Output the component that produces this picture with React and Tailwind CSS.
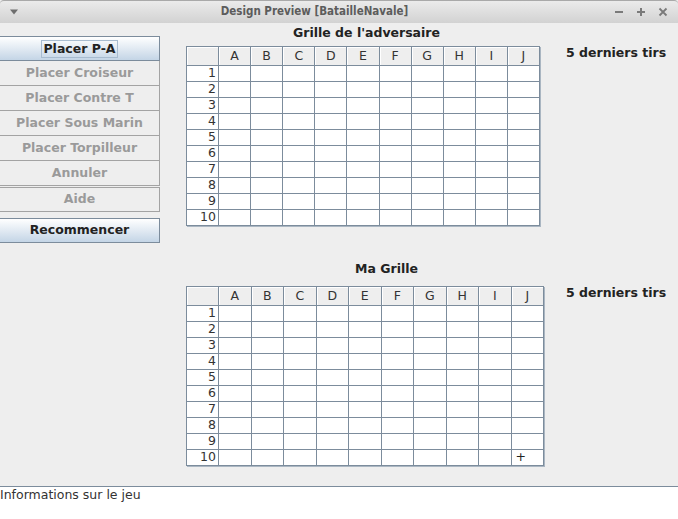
import React from 'react';

const letters = ['A', 'B', 'C', 'D', 'E', 'F', 'G', 'H', 'I', 'J'];
const rows = [1, 2, 3, 4, 5, 6, 7, 8, 9, 10];

const buttons = [
  { label: 'Placer Croiseur' },
  { label: 'Placer Contre T' },
  { label: 'Placer Sous Marin' },
  { label: 'Placer Torpilleur' },
  { label: 'Annuler' },
];

function Board({ wide, marks = {} }) {
  return (
    <div
      className={`grid ${wide ? 'w-[358px]' : 'w-[354px]'} grid-cols-[31px_repeat(10,1fr)] grid-rows-[18px_repeat(10,15px)] gap-px bg-[#7c8c9c] border border-[#7c8c9c] shadow-[1px_1px_0_#aab6c2]`}
    >
      <div className="bg-[#eeeeee] shadow-[inset_1px_1px_0_#ffffff]" />
      {letters.map((l) => (
        <div
          key={l}
          className="bg-[#eeeeee] shadow-[inset_1px_1px_0_#ffffff] flex items-center justify-center text-[12.5px] leading-none text-[#333]"
        >
          {l}
        </div>
      ))}
      {rows.map((r) => (
        <React.Fragment key={r}>
          <div className="bg-white flex items-center justify-end pr-[2px] text-[12.5px] leading-none text-[#333]">
            {r}
          </div>
          {letters.map((l) => (
            <div key={l} className="bg-white flex items-center pl-[4px] text-[12.5px] leading-none text-[#222]">
              {marks[`${l}${r}`] || ''}
            </div>
          ))}
        </React.Fragment>
      ))}
    </div>
  );
}

export default function App() {
  return (
    <div
      className="w-[678px] h-[519px] bg-[#eeeeee] flex flex-col overflow-hidden"
      style={{ fontFamily: '"DejaVu Sans", sans-serif' }}
    >
      {/* Title bar */}
      <div className="h-[23px] shrink-0 rounded-t-[4px] border-t border-[#a9a9a9] bg-gradient-to-b from-[#ebebeb] to-[#d2d2d2] flex items-center px-[8px]">
        <svg width="10" height="8" viewBox="0 0 10 8" className="ml-[1px]">
          <path d="M1 1.5 L9 1.5 L5 6.5 Z" fill="#6e6e6e" />
        </svg>
        <div
          className="flex-1 text-center text-[11.5px] font-bold text-[#5c5c5c] ml-[-4px]"
          style={{ fontFamily: '"Liberation Sans Narrow", "DejaVu Sans Condensed", "Liberation Sans", sans-serif' }}
        >
          Design Preview [BatailleNavale]
        </div>
        <div className="flex items-center gap-[12px] mr-[2px]">
          <svg width="10" height="10" viewBox="0 0 10 10">
            <rect x="1" y="4" width="8" height="2" fill="#7a7a7a" />
          </svg>
          <svg width="10" height="10" viewBox="0 0 10 10">
            <rect x="1" y="4" width="8" height="2" fill="#7a7a7a" />
            <rect x="4" y="1" width="2" height="8" fill="#7a7a7a" />
          </svg>
          <svg width="10" height="10" viewBox="0 0 10 10">
            <path d="M1.5 1.5 L8.5 8.5 M8.5 1.5 L1.5 8.5" stroke="#7a7a7a" strokeWidth="1.8" />
          </svg>
        </div>
      </div>

      {/* Main area */}
      <div className="flex-1 flex">
        {/* Buttons */}
        <div className="w-[160px] shrink-0 pt-[13px] flex flex-col text-[12.5px] font-bold">
          <div className="h-[25px] border border-l-0 border-[#7c8c9c] bg-gradient-to-b from-[#ffffff] to-[#c4d5e6] flex items-center justify-center">
            <span className="border border-[#a8bcd0] px-[1px] leading-[16px] text-[#222]">Placer P-A</span>
          </div>
          {buttons.map((b) => (
            <div
              key={b.label}
              className="h-[25px] border border-l-0 border-t-0 border-[#a3a3a3] flex items-center justify-center text-[#9a9a9a]"
            >
              {b.label}
            </div>
          ))}
          <div className="h-[25px] mt-[1px] border border-l-0 border-[#a3a3a3] flex items-center justify-center text-[#9a9a9a]">
            Aide
          </div>
          <div className="h-[25px] mt-[6px] border border-l-0 border-[#7c8c9c] bg-gradient-to-b from-[#ffffff] to-[#c4d5e6] flex items-center justify-center text-[#222]">
            Recommencer
          </div>
        </div>

        {/* Boards */}
        <div className="flex flex-col pl-[26px]">
          <div className="mt-[2px] h-[16px] leading-[16px] pl-[107px] text-[12.5px] font-bold text-[#222]">
            Grille de l'adversaire
          </div>
          <div className="mt-[5px] flex items-start">
            <Board />
            <div className="ml-[26px] mt-[-1px] leading-[16px] text-[12.5px] font-bold text-[#222]">5 derniers tirs</div>
          </div>

          <div className="mt-[35px] h-[16px] leading-[16px] pl-[169px] text-[12.5px] font-bold text-[#222]">
            Ma Grille
          </div>
          <div className="mt-[9px] flex items-start">
            <Board wide marks={{ J10: '+' }} />
            <div className="ml-[22px] mt-[-1px] leading-[16px] text-[12.5px] font-bold text-[#222]">5 derniers tirs</div>
          </div>
        </div>
      </div>

      {/* Info area */}
      <div className="h-[33px] shrink-0 border-t border-[#7c8c9c] bg-white text-[12.5px] leading-[16px] text-[#333]">
        Informations sur le jeu
      </div>
    </div>
  );
}
